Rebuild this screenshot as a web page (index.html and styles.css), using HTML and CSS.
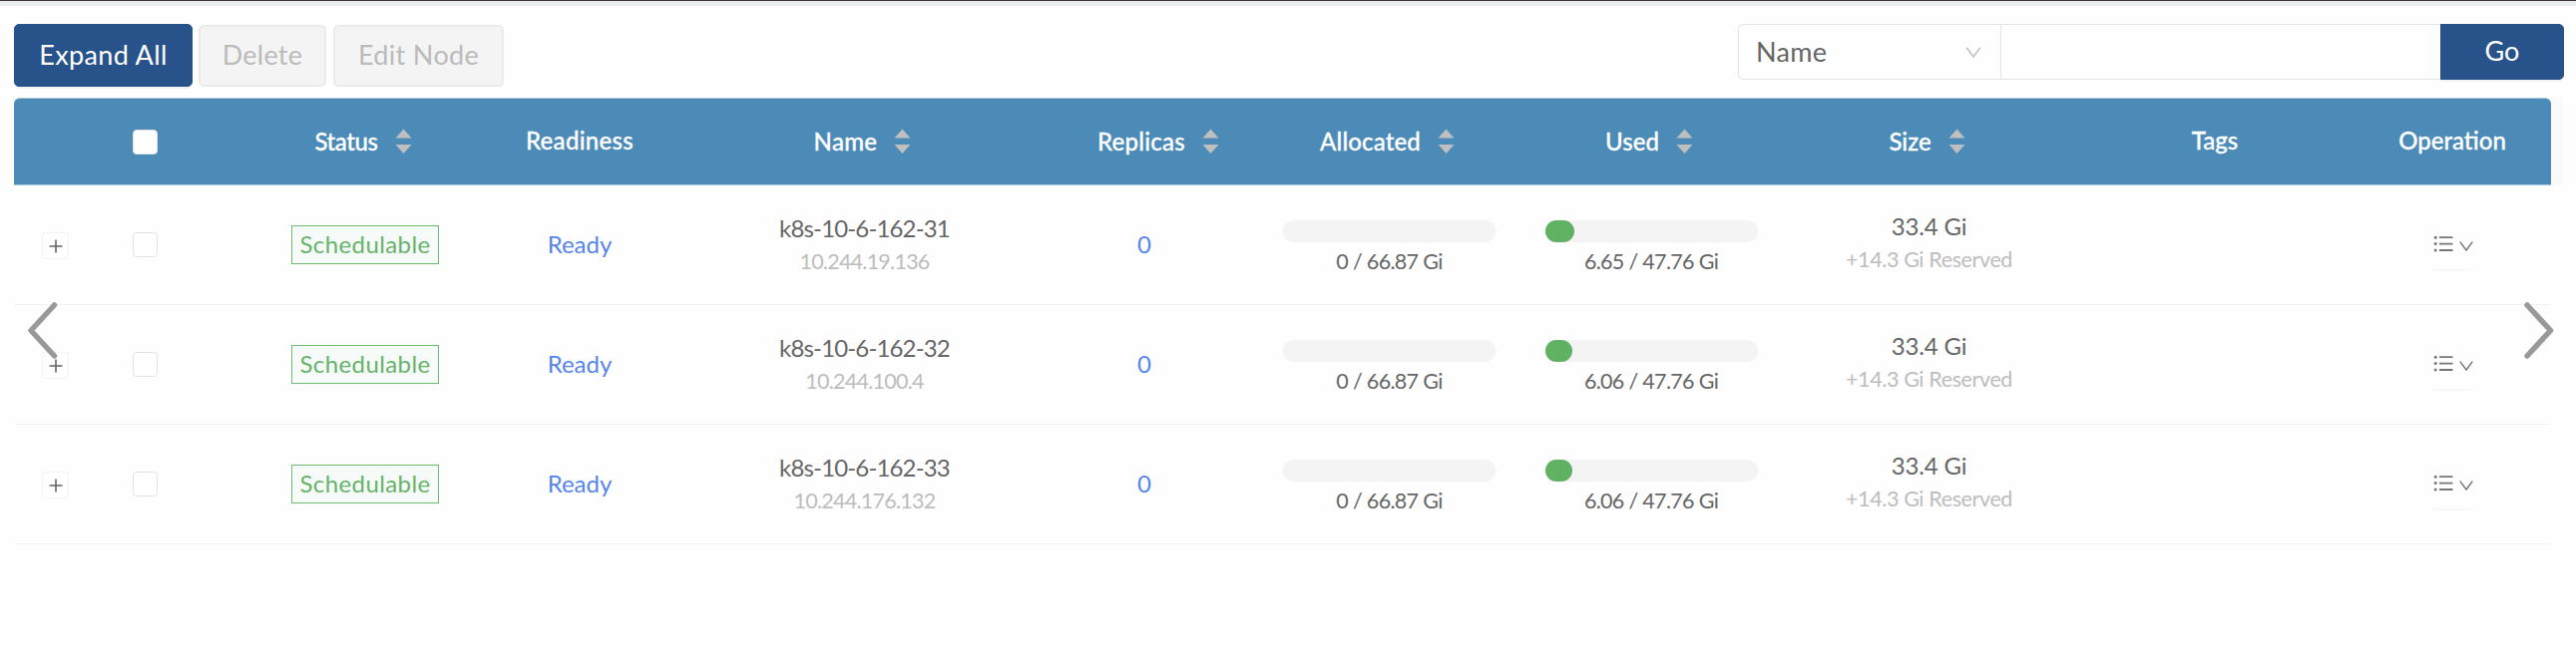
FILE: index.html
```html
<!DOCTYPE html>
<html lang="en">
<head>
<meta charset="utf-8">
<title>Nodes</title>
<link rel="stylesheet" href="styles.css">
</head>
<body>
<svg class="defs" width="0" height="0">
  <symbol id="sort" viewBox="0 0 17 26"><path d="M8.5 0.5 16.5 9.5H.5zM8.5 25 .5 16H16.5z" fill="#bfbfbf"/></symbol>
  <symbol id="plus" viewBox="0 0 14 14"><path d="M7 .5v13M.5 7h13" stroke="#666" stroke-width="1.6" fill="none"/></symbol>
  <symbol id="list" viewBox="0 0 20 18"><path d="M6 2.2h13.5M6 8.6h13.5M6 15h13.5" stroke="#777" stroke-width="1.8" fill="none"/><circle cx="2.2" cy="2.2" r="1.5" fill="#777"/><circle cx="2.2" cy="8.6" r="1.5" fill="#777"/><circle cx="2.2" cy="15" r="1.5" fill="#777"/></symbol>
  <symbol id="down" viewBox="0 0 14 10"><path d="M.8.6 7 9 13.2.6" stroke="currentColor" stroke-width="1.5" fill="none"/></symbol>
</svg>
<div class="topline"></div>
<div class="toolbar">
  <button class="btn primary"><span class="t-expand">Expand All</span></button>
  <button class="btn disabled del"><span class="t-delete">Delete</span></button>
  <button class="btn disabled edit"><span class="t-edit">Edit Node</span></button>
  <div class="search">
    <div class="select"><span class="t-select">Name</span><svg class="caret"><use href="#down"/></svg></div>
    <div class="input"></div>
    <button class="go"><span class="t-go">Go</span></button>
  </div>
</div>
<div class="table">
  <div class="headwrap">
    <div class="grid head">
      <div></div>
      <div class="check"><i class="box"></i></div>
      <div class="sortable"><span class="h-status">Status</span><svg class="sort"><use href="#sort"/></svg></div>
      <div><span class="h-readiness">Readiness</span></div>
      <div class="sortable"><span class="h-name">Name</span><svg class="sort"><use href="#sort"/></svg></div>
      <div class="sortable rep"><span class="h-replicas">Replicas</span><svg class="sort"><use href="#sort"/></svg></div>
      <div class="sortable"><span class="h-allocated">Allocated</span><svg class="sort"><use href="#sort"/></svg></div>
      <div class="sortable"><span class="h-used">Used</span><svg class="sort"><use href="#sort"/></svg></div>
      <div class="sortable"><span class="h-size">Size</span><svg class="sort"><use href="#sort"/></svg></div>
      <div><span class="h-tags">Tags</span></div>
      <div class="op"><span class="h-operation">Operation</span></div>
    </div>
  </div>
  <div class="grid row">
    <div><i class="expander"><svg><use href="#plus"/></svg></i></div>
    <div class="check"><i class="box"></i></div>
    <div><span class="tag">Schedulable</span></div>
    <div><a class="link ready">Ready</a></div>
    <div class="stack"><span class="name">k8s-10-6-162-31</span><span class="ip">10.244.19.136</span></div>
    <div><a class="link">0</a></div>
    <div class="stack"><div class="bar"></div><span class="cap">0 / 66.87 Gi</span></div>
    <div class="stack"><div class="bar"><div class="fill" style="width:13.92%"></div></div><span class="cap">6.65 / 47.76 Gi</span></div>
    <div class="stack size"><span class="total">33.4 Gi</span><span class="reserved">+14.3 Gi Reserved</span></div>
    <div></div>
    <div class="op"><span class="menu"><svg class="list"><use href="#list"/></svg><svg class="down"><use href="#down"/></svg></span></div>
  </div>
  <div class="grid row">
    <div><i class="expander"><svg><use href="#plus"/></svg></i></div>
    <div class="check"><i class="box"></i></div>
    <div><span class="tag">Schedulable</span></div>
    <div><a class="link ready">Ready</a></div>
    <div class="stack"><span class="name">k8s-10-6-162-32</span><span class="ip">10.244.100.4</span></div>
    <div><a class="link">0</a></div>
    <div class="stack"><div class="bar"></div><span class="cap">0 / 66.87 Gi</span></div>
    <div class="stack"><div class="bar"><div class="fill" style="width:12.69%"></div></div><span class="cap">6.06 / 47.76 Gi</span></div>
    <div class="stack size"><span class="total">33.4 Gi</span><span class="reserved">+14.3 Gi Reserved</span></div>
    <div></div>
    <div class="op"><span class="menu"><svg class="list"><use href="#list"/></svg><svg class="down"><use href="#down"/></svg></span></div>
  </div>
  <div class="grid row">
    <div><i class="expander"><svg><use href="#plus"/></svg></i></div>
    <div class="check"><i class="box"></i></div>
    <div><span class="tag">Schedulable</span></div>
    <div><a class="link ready">Ready</a></div>
    <div class="stack"><span class="name">k8s-10-6-162-33</span><span class="ip">10.244.176.132</span></div>
    <div><a class="link">0</a></div>
    <div class="stack"><div class="bar"></div><span class="cap">0 / 66.87 Gi</span></div>
    <div class="stack"><div class="bar"><div class="fill" style="width:12.69%"></div></div><span class="cap">6.06 / 47.76 Gi</span></div>
    <div class="stack size"><span class="total">33.4 Gi</span><span class="reserved">+14.3 Gi Reserved</span></div>
    <div></div>
    <div class="op"><span class="menu"><svg class="list"><use href="#list"/></svg><svg class="down"><use href="#down"/></svg></span></div>
  </div>
</div>
<svg class="nav prev" viewBox="0 0 30 58"><path d="M26.5 3 3 28.5 26.5 54" /></svg>
<svg class="nav next" viewBox="0 0 30 58"><path d="M3 3 26.5 28.5 3 54" /></svg>
</body>
</html>
```
FILE: styles.css
```css
* { box-sizing: border-box; }
body {
  margin: 0;
  height: 656px;
  overflow: hidden;
  position: relative;
  background: #fefefe;
  color: #666;
  font: 24px/30px Lato, sans-serif;
}
svg { display: block; flex: none; }
.defs { position: absolute; }
.topline { height: 6px; border-top: 1px solid #3a3338; background: #ecedf0; }
span, a { white-space: nowrap; }

.toolbar { display: flex; align-items: flex-start; padding: 18px 12px 0 14px; height: 92px; }
.btn, .go {
  font: 27px/32px Lato, sans-serif;
  padding: 0 0 2px;
  border-radius: 5px;
  border: 1px solid #28528a;
  display: flex;
  align-items: center;
  justify-content: center;
}
.primary { width: 179px; height: 63px; background: #28528a; color: #fff; box-shadow: 0 2px 1px #f3f3f5; }
.disabled { height: 62px; margin-top: 1px; background: #f4f4f4; border: 2px solid #ebebeb; color: #bbb; }
.del { width: 128px; margin-left: 6px; }
.edit { width: 171px; margin-left: 7px; }
.t-expand { letter-spacing: 0.35px; }
.t-delete { letter-spacing: 0.25px; }
.t-edit { letter-spacing: 0.35px; }
.t-select { letter-spacing: 0.3px; padding-bottom: 1px; }
.search { display: flex; margin-left: auto; }
.select {
  width: 264px; height: 56px;
  border: 1px solid #e3e3e3;
  border-radius: 5px 0 0 5px;
  display: flex; align-items: center; justify-content: space-between;
  padding: 0 19px 0 17px;
  font-size: 27px;
}
.caret { width: 16px; height: 11px; color: #c2c2c2; }
.input { width: 440px; height: 56px; border: 1px solid #e3e3e3; border-width: 1px 0; }
.go { width: 124px; height: 56px; background: #28528a; color: #fff; border-radius: 0 5px 5px 0; box-shadow: 0 2px 1px #f3f3f5; }

.table { width: 2555px; margin-left: 14px; }
.headwrap { background: #fafafa; }
.grid {
  width: 2543px;
  display: grid;
  grid-template-columns: 83px 160px 218px 212px 359px 202px 289px 236px 321px 252px 211px;
}
.grid > div { display: flex; align-items: center; justify-content: center; }
.head { height: 88px; background: #4c8bb8; border: solid #a9c8de; border-width: 1px 0; border-radius: 6px 6px 0 0; color: #fff; font-weight: 500; -webkit-text-stroke: 0.3px #fff; }
.head span { padding-bottom: 3px; }
.head .sortable span { padding-bottom: 1px; }
.h-status { letter-spacing: -0.4px; }
.h-readiness, .h-name { letter-spacing: 0.3px; }
.h-replicas { letter-spacing: 0.25px; }
.h-allocated { letter-spacing: 0.15px; }
.sort { width: 17px; height: 26px; margin-left: 17px; }
.grid > .sortable { padding-right: 4px; }
.grid > .rep { padding: 0 0 0 28px; }
.grid > .check { padding-right: 64px; }
.grid > .op { padding-left: 13px; }
.head .box, .box { width: 25px; height: 25px; background: #fff; border: 1px solid #e2e2e2; border-radius: 4px; }
.row .box { margin-bottom: 1px; }
.row { height: 120px; border-bottom: 1px solid #f2f2f2; }
.expander { width: 27px; height: 27px; border: 1px solid #f3f3f3; border-radius: 4px; background: #fff; display: flex; align-items: center; justify-content: center; margin-top: 2px; }
.expander svg { width: 14px; height: 14px; }
.tag { width: 148px; height: 39px; border: 1px solid #6dba70; background: #f6faf8; color: #67b46a; display: flex; align-items: center; justify-content: center; padding-bottom: 2px; letter-spacing: 0.4px; }
.link { color: #5785ec; padding-bottom: 2px; }
.grid > .stack { flex-direction: column; justify-content: flex-start; padding-top: 35px; }
.name { line-height: 18px; margin-top: -1px; letter-spacing: -0.85px; }
.ip, .cap, .reserved { font-size: 21.5px; line-height: 18px; }
.ip { color: #bdbdbd; margin-top: 15px; letter-spacing: -0.75px; }
.bar { width: 213px; height: 22px; border-radius: 11px; background: #f4f4f4; }
.fill { height: 22px; border-radius: 11px; background: #61b163; }
.cap { margin-top: 10px; letter-spacing: -0.68px; }
.grid > .size { padding-top: 32px; }
.total { line-height: 18px; letter-spacing: -0.15px; }
.reserved { color: #bdbdbd; margin-top: 15px; letter-spacing: -0.38px; }
.menu { display: flex; align-items: center; width: 43px; height: 52px; border-bottom: 2px solid #f8f8f8; border-radius: 5px; padding-left: 2px; }
.list { width: 20px; height: 18px; }
.down { width: 14px; height: 10px; margin: 4px 0 0 6px; color: #777; }
.nav { position: absolute; top: 303px; width: 30px; height: 58px; fill: none; stroke: #999; stroke-width: 5.5; stroke-linecap: round; stroke-linejoin: round; }
.prev { left: 28px; }
.next { left: 2530px; }
```
